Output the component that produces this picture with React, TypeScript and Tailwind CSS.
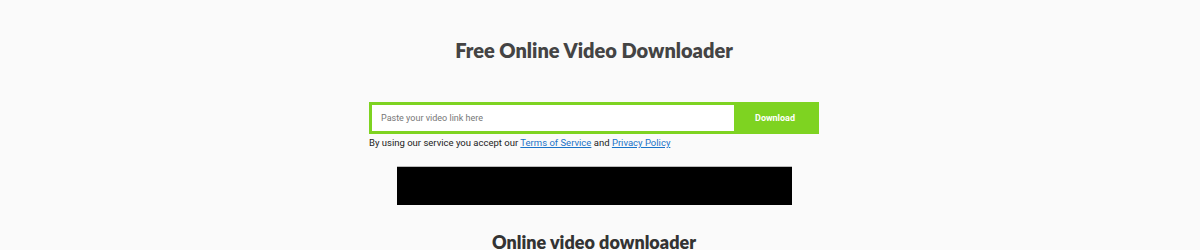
export default function App() {
  return (
    <div className="min-h-[250px] w-full overflow-hidden bg-[#fafafa]">
      <div className="flex w-[1188px] flex-col items-center">
        <h1 className="pt-[38px] text-[20px] font-extrabold leading-[24px] text-[#444]" style={{ fontFamily: "Lato, sans-serif" }}>
          Free Online Video Downloader
        </h1>

        <div className="mt-[40px] w-[450px]" style={{ fontFamily: "Roboto, sans-serif" }}>
          <form className="flex h-[32px] border-[3px] border-[#7ed321] bg-[#7ed321]">
            <input
              type="text"
              placeholder="Paste your video link here"
              className="h-full flex-1 bg-white px-[9px] text-[9px] text-[#333] outline-none placeholder:text-[#777]"
            />
            <button type="button" className="w-[82px] pt-[2px] text-[9px] font-bold text-white">
              Download
            </button>
          </form>
          <p className="mt-[3px] text-[9.5px] leading-[12px] text-[#222]">
            By using our service you accept our{" "}
            <a href="#" className="text-[#1a73c8] underline">Terms of Service</a> and{" "}
            <a href="#" className="text-[#1a73c8] underline">Privacy Policy</a>
          </p>
        </div>

        <div className="mt-[17px] h-[39px] w-[395px] border-t border-[#bbb] bg-black" />

        <h2 className="mt-[26px] text-[18px] font-extrabold leading-[22px] text-[#333]" style={{ fontFamily: "Lato, sans-serif" }}>
          Online video downloader
        </h2>
      </div>
    </div>
  );
}
